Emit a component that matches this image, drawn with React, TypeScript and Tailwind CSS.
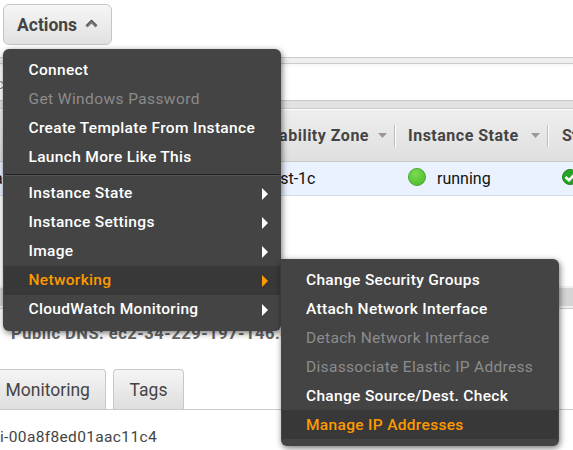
type Item = { label: string; disabled?: boolean; active?: boolean; arrow?: boolean };

const primary: Item[] = [
  { label: "Connect" },
  { label: "Get Windows Password", disabled: true },
  { label: "Create Template From Instance" },
  { label: "Launch More Like This" },
];

const groups: Item[] = [
  { label: "Instance State", arrow: true },
  { label: "Instance Settings", arrow: true },
  { label: "Image", arrow: true },
  { label: "Networking", arrow: true, active: true },
  { label: "CloudWatch Monitoring", arrow: true },
];

const networking: Item[] = [
  { label: "Change Security Groups" },
  { label: "Attach Network Interface" },
  { label: "Detach Network Interface", disabled: true },
  { label: "Disassociate Elastic IP Address", disabled: true },
  { label: "Change Source/Dest. Check" },
  { label: "Manage IP Addresses", active: true },
];

function MenuItem({ item, nested }: { item: Item; nested?: boolean }) {
  const color = item.active
    ? "bg-[#383838] text-[#ff9900] font-medium"
    : item.disabled
      ? "text-[#8c8c8c] font-normal"
      : "text-white font-medium";
  const inset = nested ? "pt-0.5 pl-[24px]" : "pl-[24.5px]";
  const tracking = item.disabled && !nested ? "tracking-[0.4px]" : "tracking-[0.32px]";
  return (
    <li className={`mx-px flex h-[29px] items-center justify-between pr-3 text-[15.5px] leading-[29px] ${inset} ${tracking} ${color}`}>
      <span>{item.label}</span>
      {item.arrow && (
        <svg className="block h-3 w-1.5" viewBox="0 0 6 12" fill="currentColor">
          <path d="M0 0L6 6L0 12Z" />
        </svg>
      )}
    </li>
  );
}

function SortArrow() {
  return (
    <svg className="block h-[5px] w-[9px] shrink-0" viewBox="0 0 9 5" fill="#999">
      <path d="M0 0H9L4.5 5Z" />
    </svg>
  );
}

export default function App() {
  return (
    <div className="relative h-[450px] w-[573px] overflow-hidden bg-white font-['Roboto',sans-serif] whitespace-nowrap text-[#444]">
      <div className="flex h-[57px] items-start pt-1 pl-[3px]">
        <button className="flex h-[41px] w-[109px] items-center rounded-[6px] border border-[#c5c5c5] bg-linear-to-b from-[#f6f6f6] to-[#e1e1e1] pl-[13px] text-[17.5px] font-bold text-[#444]">
          <span className="mt-px">Actions</span>
          <svg className="mb-[3px] ml-2 h-[9px] w-[13px]" viewBox="0 0 13 9" fill="none" stroke="#777" strokeWidth="3">
            <path d="M1.5 7.5L6.5 2.5L11.5 7.5" />
            <path d="M1.5 6.2L6.5 1.2L11.5 6.2" stroke="#444" strokeWidth="1" />
          </svg>
        </button>
      </div>
      <div className="h-[7px] border-y border-[#ccc] bg-[#eee]" />
      <div className="flex h-9 items-center bg-linear-to-b from-[#f5f5f5] from-0% to-white to-10% text-[15px] text-[#888]">
        <span className="mt-1 -ml-1">c</span>
      </div>
      <div className="h-[9px] border-y border-[#c8c8c8] bg-[#e2e2e2]" />
      <div className="flex h-[53px] items-center border-t border-b border-t-white border-b-[#c8c8c8] bg-linear-to-b from-[#eee] to-[#dfdfdf] text-[16px] font-bold">
        <div className="flex h-[22px] w-[395px] shrink-0 items-center justify-end border-r border-[#bbb] pr-[7px]">
          <span className="mr-[9px] tracking-[0.5px]">Availability Zone</span>
          <SortArrow />
        </div>
        <div className="flex h-[22px] w-[153px] shrink-0 items-center justify-between border-r border-l border-r-[#bbb] border-l-white pr-[7px] pl-[12px]">
          <span className="tracking-[0.5px]">Instance State</span>
          <SortArrow />
        </div>
        <div className="h-[22px] border-l border-white pl-[13px] leading-[22px]">Status Checks</div>
      </div>
      <div className="flex h-[34px] items-center border-b border-[#d4dce8] bg-[#eaf2ff] text-[16px] text-[#111]">
        <span className="-ml-[6px] w-[269px] shrink-0">a</span>
        <span className="w-[145px] shrink-0">east-1c</span>
        <span className="mb-[3px] size-[18px] shrink-0 rounded-full border border-[#46a526] bg-[radial-gradient(circle_at_40%_30%,#7bdc50,#45b82a)]" />
        <span className="ml-[11px] w-[125px] shrink-0">running</span>
        <svg className="mb-[3px] size-4 shrink-0" viewBox="0 0 16 16">
          <circle cx="8" cy="8" r="7.5" fill="#28a329" stroke="#16851b" />
          <path d="M3.5 8L7 11.2L13 5" fill="none" stroke="#fff" strokeWidth="2.6" />
        </svg>
      </div>
      <div className="h-[90px]" />
      <div className="h-[22px] border-y-2 border-t-[#f0f0f0] border-b-[#f0f0f0] bg-[#d5d5d5]" />
      <div className="h-[62px] border-t border-[#ccc] pt-[13px] pl-[11px] text-[16.5px] leading-6 font-bold tracking-[0.5px] text-[#666]">
        Public DNS: ec2-34-229-197-146.compute
      </div>
      <div className="flex h-[40px] items-end gap-[7px] border-b border-[#ccc] text-[17.5px]">
        <div className="-ml-2 flex h-10 w-[114px] items-center rounded-t border border-b-0 border-[#c8c8c8] bg-linear-to-b from-[#f5f5f5] to-[#dedede] pt-px pl-[12.5px]">Monitoring</div>
        <div className="flex h-10 w-[71px] items-center justify-center rounded-t border border-b-0 border-[#c8c8c8] bg-linear-to-b from-[#f5f5f5] to-[#dedede] pt-px">Tags</div>
      </div>
      <div className="pt-[15px] text-[15.5px] leading-6 tracking-[0.35px]">i-00a8f8ed01aac11c4</div>

      <ul className="absolute top-[49px] left-[3px] h-[282px] w-[278px] rounded-[6px] bg-[#444] pt-[7px] shadow-[1px_2px_6px_rgba(0,0,0,0.55)]">
        {primary.map((item) => <MenuItem key={item.label} item={item} />)}
        <li className="mx-0.5 mt-[2px] mb-[3px] h-0.5 border-t border-b border-t-[#222] border-b-[#555]" />
        {groups.map((item) => <MenuItem key={item.label} item={item} />)}
      </ul>
      <ul className="absolute top-[259px] left-[281px] h-[187px] w-[278px] rounded-[6px] rounded-tl-none bg-[#444] pt-[6px] shadow-[1px_2px_6px_rgba(0,0,0,0.55)]">
        {networking.map((item) => <MenuItem key={item.label} item={item} nested />)}
      </ul>
    </div>
  );
}
